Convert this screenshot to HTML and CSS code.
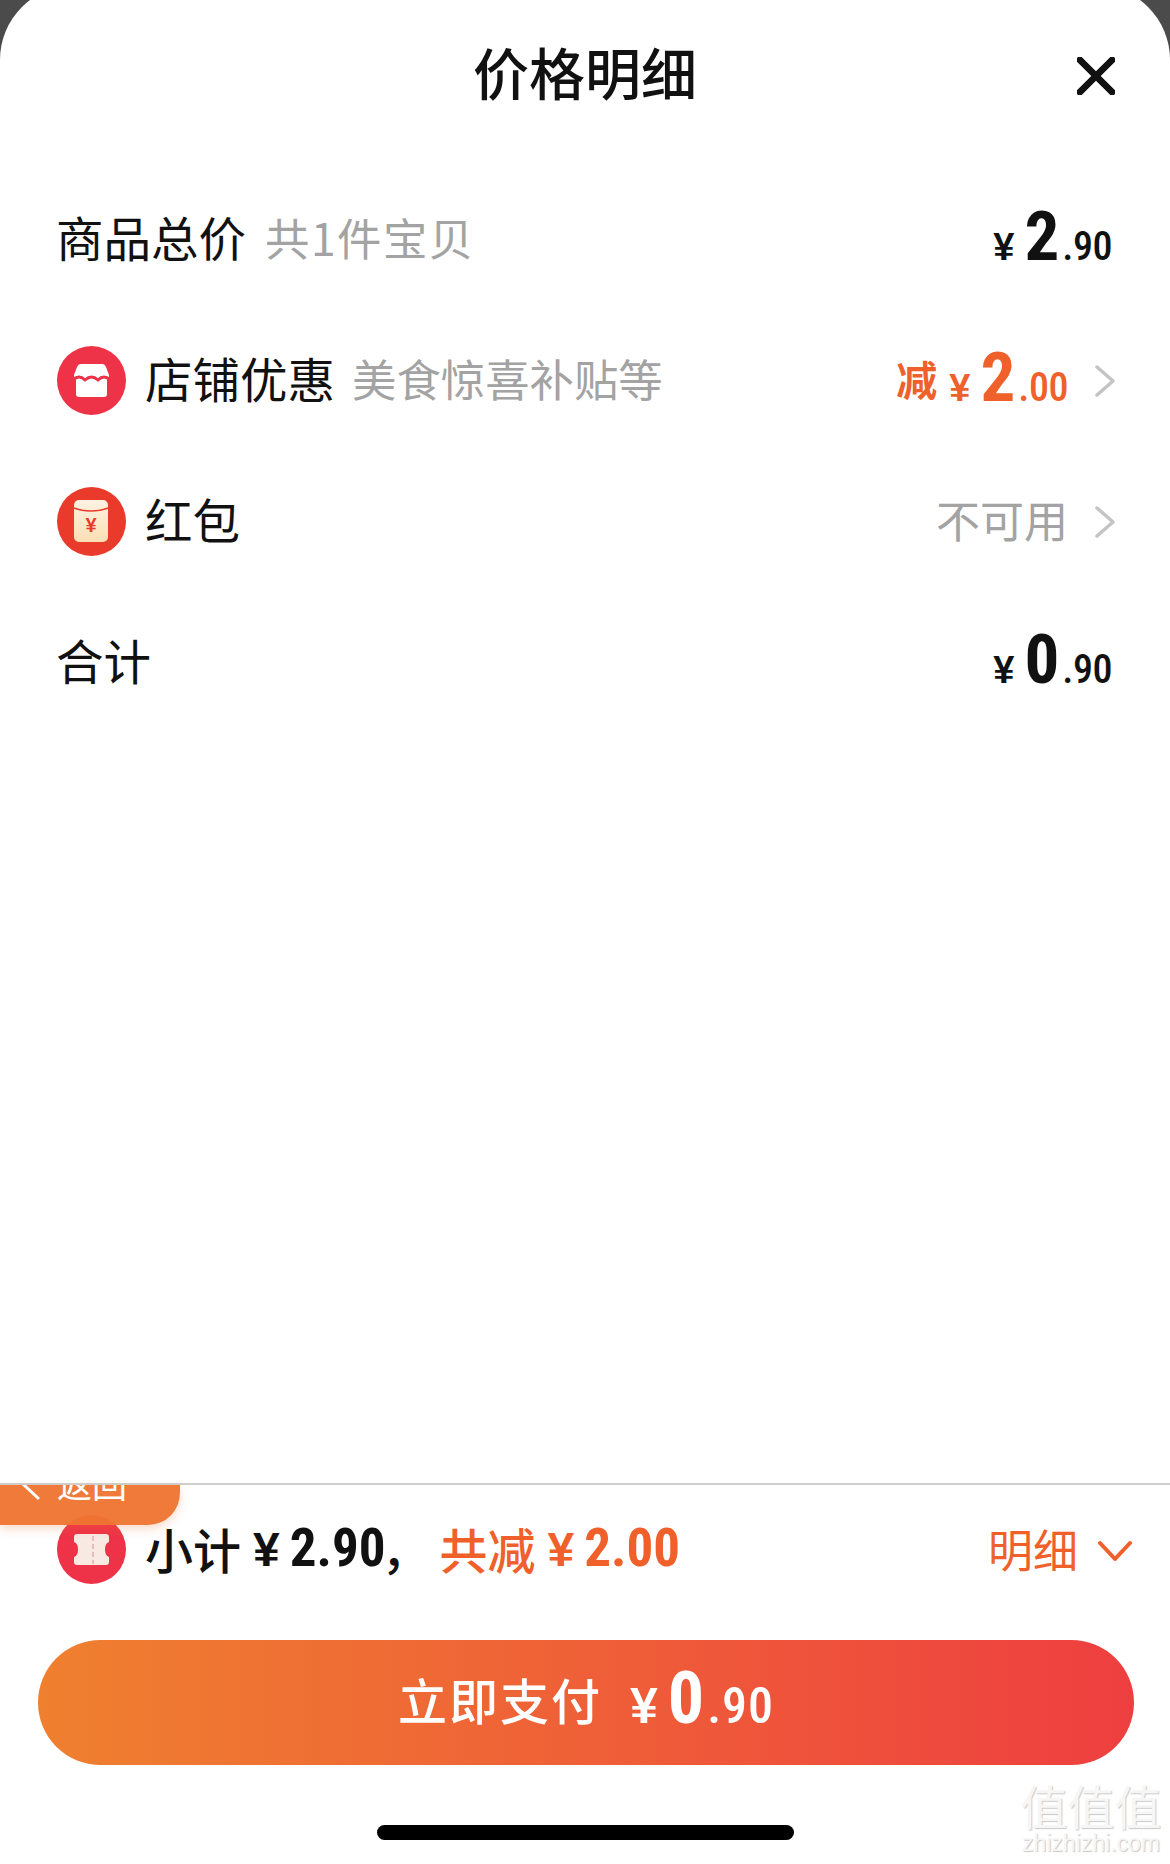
FILE: index.html
```html
<!DOCTYPE html>
<html lang="zh-CN">
  <head>
    <title>价格明细</title>
    <meta charset="utf-8" />
    <link rel="stylesheet" href="styles.css">
  </head>
  <body>
    <main class="sheet">
      <header class="sheet-head">
        <h1>价格明细</h1>
        <svg class="close" viewBox="0 0 40 40">
          <path d="M3 3 37 37M37 3 3 37" />
        </svg>
      </header>

      <section class="rows">
        <div class="row">
          <span class="label">商品总价</span>
          <span class="sub sub-count">共1件宝贝</span>
          <span class="price">
            <span class="cur">¥</span><span class="int">2</span><span class="dec">.90</span>
          </span>
        </div>

        <div class="row">
          <svg class="badge" viewBox="0 0 69 69">
            <circle cx="34.5" cy="34.5" r="34.5" fill="#ee3348" />
            <path fill="#fff" d="M24 18H45C47 18 48 19 49 21L52 29C52 32 51 33 50 34V48C50 50 49 51 47 51H22C20 51 19 50 19 48V34C18 33 17 32 17 29L20 21C21 19 22 18 24 18Z" />
            <path fill="none" stroke="#ee3348" stroke-width="2.8" d="M16 34Q22 28 28 34Q34.5 28 41 34Q47 28 53 34" />
          </svg>
          <span class="label">店铺优惠</span>
          <span class="sub">美食惊喜补贴等</span>
          <span class="price orange">
            <span class="minus">减</span><span class="cur">¥</span><span class="int">2</span><span class="dec">.00</span>
          </span>
          <svg class="chev" viewBox="0 0 20 32"><path d="M2 2 18 16 2 30" /></svg>
        </div>

        <div class="row">
          <svg class="badge" viewBox="0 0 69 69">
            <defs>
              <linearGradient id="env" x1="0" y1="0" x2="0" y2="1">
                <stop offset="0" stop-color="#fdf3e2" />
                <stop offset="1" stop-color="#fbdfb4" />
              </linearGradient>
            </defs>
            <circle cx="34.5" cy="34.5" r="34.5" fill="#ea3a2c" />
            <rect x="17" y="13" width="34" height="42" rx="5" fill="url(#env)" />
            <path d="M17 21C27 25 41 25 51 21" fill="none" stroke="#ea3a2c" stroke-width="1.5" />
            <text x="34" y="45" class="env-yen">¥</text>
          </svg>
          <span class="label">红包</span>
          <span class="none">不可用</span>
          <svg class="chev" viewBox="0 0 20 32"><path d="M2 2 18 16 2 30" /></svg>
        </div>

        <div class="row">
          <span class="label">合计</span>
          <span class="price">
            <span class="cur">¥</span><span class="int">0</span><span class="dec">.90</span>
          </span>
        </div>
      </section>

      <footer class="foot">
        <a class="back">
          <svg viewBox="0 0 20 32"><path d="M18 2 3 16 18 30" /></svg>
          <span>返回</span>
        </a>

        <div class="summary">
          <svg class="badge" viewBox="0 0 69 69">
            <circle cx="34.5" cy="34.5" r="34.5" fill="#ee3348" />
            <path fill="#f8e9e3" d="M20 19H49C51 19 52 20 52 22V27C49 28 48 31 48 34.5S49 41 52 42V47C52 49 51 50 49 50H20C18 50 17 49 17 47V42C20 41 21 38 21 34.5S20 28 17 27V22C17 20 18 19 20 19Z" />
            <path d="M36 21V49" fill="none" stroke="#eebcb6" stroke-width="2" stroke-dasharray="5 3" />
          </svg>
          <span class="sum-text">小计</span>
          <span class="sum-num"><i>¥</i>2.90</span>
          <span class="sum-text comma">，</span>
          <span class="sum-text orange">共减</span>
          <span class="sum-num orange"><i>¥</i>2.00</span>
          <span class="detail">明细</span>
          <svg class="detail-chev" viewBox="0 0 34 22"><path d="M2 3 17 19 32 3" /></svg>
        </div>

        <button class="pay">
          <span class="pay-text">立即支付</span>
          <span class="price">
            <span class="cur">¥</span><span class="int">0</span><span class="dec">.90</span>
          </span>
        </button>

        <div class="home-bar"></div>
      </footer>

      <div class="mark">
        <div class="mark-cn">值值值</div>
        <div class="mark-en">zhizhizhi.com</div>
      </div>
    </main>
  </body>
</html>
```

FILE: styles.css
```css
html {
  height: 100%;
}

body {
  margin: 0;
  height: 1864px;
  overflow: hidden;
  background: #4b4b4b;
  font-family: "Noto Sans CJK SC", "Liberation Sans", sans-serif;
  color: #111;
}

.sheet {
  position: relative;
  display: flex;
  flex-direction: column;
  height: 1879px;
  margin-top: -15px;
  background: #fff;
  border-radius: 75px 75px 0 0;
  overflow: hidden;
}

.sheet-head {
  display: flex;
  justify-content: center;
  align-items: center;
  height: 184px;
  padding-bottom: 12px;
  box-sizing: border-box;
  position: relative;
}

.sheet-head h1 {
  margin: 0;
  font-size: 56px;
  font-weight: 500;
  line-height: 80px;
}

.close {
  position: absolute;
  right: 55px;
  top: 72px;
  width: 38px;
  height: 38px;
  fill: none;
  stroke: #111;
  stroke-width: 7;
  stroke-linecap: round;
}

.row {
  display: flex;
  align-items: center;
  height: 141px;
  padding: 0 55px 0 56px;
}

.badge {
  flex: none;
  width: 69px;
  height: 69px;
  margin-left: 1px;
  margin-right: 19px;
}

.env-yen {
  font-family: "Liberation Sans", sans-serif;
  font-size: 20px;
  font-weight: 700;
  fill: #ea3a2c;
  text-anchor: middle;
}

.label {
  padding-bottom: 6px;
  font-size: 47.5px;
  line-height: 60px;
}

.sub {
  margin-left: 17px;
  padding-bottom: 6px;
  font-size: 44.4px;
  line-height: 60px;
  color: #a3a3a3;
}

.sub-count {
  margin-left: 19px;
  letter-spacing: 1.5px;
}

.none {
  margin-left: auto;
  padding-bottom: 6px;
  font-size: 44px;
  line-height: 60px;
  color: #a3a3a3;
}

.price {
  display: flex;
  align-items: baseline;
  margin-left: auto;
  padding-bottom: 6px;
  font-family: "Roboto", sans-serif;
  font-stretch: 75%;
  font-weight: 700;
}

.price .minus {
  align-self: center;
  margin-right: 12px;
  font-family: "Noto Sans CJK SC", sans-serif;
  font-size: 41px;
  font-weight: 700;
}

.price .cur {
  margin-right: 10px;
  font-family: "Liberation Sans", sans-serif;
  font-size: 38px;
}

.price .int {
  font-size: 69px;
  line-height: 80px;
}

.price .dec {
  margin-left: 3px;
  font-size: 40px;
  font-weight: 500;
  letter-spacing: -0.5px;
}

.chev {
  flex: none;
  width: 20px;
  height: 32px;
  margin-left: 27px;
  fill: none;
  stroke: #c4c4c4;
  stroke-width: 3.5;
  stroke-linecap: round;
  stroke-linejoin: round;
}

.row > .price:last-child {
  margin-right: 3px;
}

.orange {
  color: #f0602a;
}

.foot {
  position: relative;
  margin-top: auto;
  padding-bottom: 24px;
  border-top: 2px solid #cfcfcf;
}

.back {
  position: absolute;
  left: 0;
  top: 0;
  width: 180px;
  height: 40px;
  display: flex;
  align-items: flex-end;
  gap: 16px;
  padding-left: 21px;
  box-sizing: border-box;
  overflow: hidden;
  background: rgba(238, 117, 50, 0.96);
  border-radius: 0 0 32px 0;
  box-shadow: 0 4px 10px rgba(238, 117, 50, 0.25);
  color: #fff;
  font-size: 35px;
  line-height: 40px;
}

.back svg {
  flex: none;
  width: 20px;
  height: 32px;
  margin-bottom: 24px;
  fill: none;
  stroke: #fff;
  stroke-width: 3;
}

.back span {
  margin-bottom: 22px;
}

.summary {
  display: flex;
  align-items: center;
  box-sizing: border-box;
  height: 132px;
  padding: 0 38px 4px 57px;
}

.summary .badge {
  margin-left: 0;
  margin-right: 19px;
}

.sum-text {
  padding-bottom: 3px;
  font-size: 48px;
  font-weight: 500;
  line-height: 60px;
}

.sum-num {
  margin-left: 12px;
  font-family: "Roboto", sans-serif;
  font-stretch: 75%;
  font-size: 53px;
  font-weight: 700;
  line-height: 60px;
}

.sum-num i {
  margin-right: 10px;
  font-family: "Liberation Sans", sans-serif;
  font-size: 48px;
  font-style: normal;
}

.comma {
  margin-left: -4px;
  margin-right: 10px;
}

.detail {
  margin-left: auto;
  font-size: 45px;
  line-height: 60px;
  color: #f0602a;
}

.detail-chev {
  flex: none;
  width: 34px;
  height: 22px;
  margin-top: 4px;
  margin-left: 20px;
  fill: none;
  stroke: #f0602a;
  stroke-width: 4;
  stroke-linecap: round;
  stroke-linejoin: round;
}

.pay {
  display: flex;
  justify-content: center;
  align-items: center;
  gap: 28px;
  width: 1096px;
  height: 125px;
  margin: 23px 0 0 38px;
  padding: 0 0 8px;
  border: 0;
  border-radius: 63px;
  background: linear-gradient(to right, #ef802f, #ee3f40);
  color: #fff;
  font-family: inherit;
}

.pay-text {
  font-size: 49px;
  font-weight: 500;
  letter-spacing: 2px;
}

.pay .price {
  margin-left: 0;
  padding-bottom: 0;
}

.pay .cur {
  font-size: 50px;
}

.pay .int {
  font-size: 72px;
}

.pay .dec {
  font-size: 50px;
  letter-spacing: 1px;
}

.home-bar {
  width: 417px;
  height: 15px;
  margin: 60px 0 0 377px;
  border-radius: 8px;
  background: #000;
}

.mark {
  position: absolute;
  right: 8px;
  bottom: 8px;
  width: 142px;
  text-align: center;
  color: #f6f6f6;
  text-shadow: 1px 1px 1px #c9c9c9;
}

.mark-cn {
  font-size: 47px;
  line-height: 50px;
  white-space: nowrap;
}

.mark-en {
  font-family: "Liberation Sans", sans-serif;
  font-size: 23px;
  line-height: 26px;
}
```
